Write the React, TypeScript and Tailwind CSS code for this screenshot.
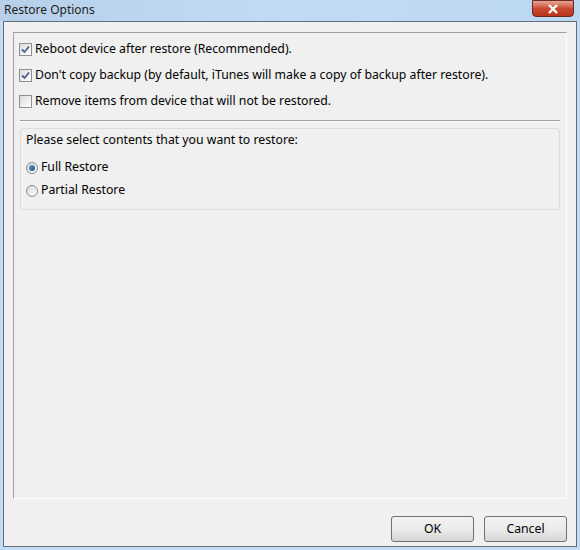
import React from "react";

function CheckRow({ checked, label }: { checked: boolean; label: string }) {
  return (
    <label className="flex items-center h-[26px] gap-[3px]">
      <span className="w-[13px] h-[13px] border border-[#8e8f8f] bg-gradient-to-br from-[#dcdcdc] to-white flex items-center justify-center shrink-0">
        {checked && (
          <svg width="9" height="9" viewBox="0 0 9 9">
            <path d="M1 4.5 L3.5 7 L8 1.5" fill="none" stroke="#4a5f97" strokeWidth="1.8" />
          </svg>
        )}
      </span>
      <span>{label}</span>
    </label>
  );
}

function RadioRow({ checked, label }: { checked: boolean; label: string }) {
  return (
    <label className="flex items-center h-[23px] gap-[3px]">
      <span className="w-[12px] h-[12px] rounded-full border border-[#8e8f8f] bg-gradient-to-br from-[#d6d6d6] to-white flex items-center justify-center shrink-0">
        {checked && <span className="w-[6px] h-[6px] rounded-full bg-gradient-to-br from-[#6ca0d8] to-[#1d4a86]" />}
      </span>
      <span>{label}</span>
    </label>
  );
}

export default function App() {
  return (
    <div
      className="w-[580px] h-[550px] bg-[#c4dbf2] flex flex-col text-[12.25px] text-black overflow-hidden"
      style={{ fontFamily: '"Segoe UI", "Noto Sans", sans-serif' }}
    >
      {/* Title bar */}
      <div className="h-[21px] flex items-start justify-between bg-gradient-to-r from-[#b7d0ea] via-[#c2dbf4] to-[#bcd7f2] shrink-0">
        <span className="pl-[4px] pt-[1px] text-[12px] text-[#1e1e1e]">Restore Options</span>
        <div className="w-[42px] h-[17px] mr-[6px] rounded-b-[4px] border border-[#6b2a1e] bg-gradient-to-b from-[#e8a595] via-[#c94a32] to-[#b9331c] flex items-center justify-center">
          <svg width="12" height="10" viewBox="0 0 12 10">
            <path d="M2 1 L10 9 M10 1 L2 9" stroke="#ffffff" strokeWidth="2.4" />
          </svg>
        </div>
      </div>

      {/* Window body */}
      <div className="flex-1 mx-[3px] mb-[3px] border border-[#5f6f80] bg-[#f0f0f0] flex flex-col px-[9px] pt-[10px]">
        <div className="h-[467px] border-t border-l border-[#a0a0a0] border-r border-b border-r-white border-b-white flex flex-col px-[5px] pt-[3px]">
          <CheckRow checked label="Reboot device after restore (Recommended)." />
          <CheckRow checked label="Don't copy backup (by default, iTunes will make a copy of backup after restore)." />
          <CheckRow checked={false} label="Remove items from device that will not be restored." />

          <div className="mt-[6px] mx-[1px] border-t border-[#a0a0a0] border-b border-b-white" />

          <div className="mt-[6px] mx-[1px] h-[82px] rounded-[3px] border border-[#dcdcdc] flex flex-col px-[5px] pt-[2px]">
            <div className="h-[18px]">Please select contents that you want to restore:</div>
            <div className="mt-[7px]">
              <RadioRow checked label="Full Restore" />
              <RadioRow checked={false} label="Partial Restore" />
            </div>
          </div>
        </div>

        <div className="flex justify-end gap-[10px] mt-[17px]">
          <button className="w-[83px] h-[26px] rounded-[3px] border border-[#707070] bg-gradient-to-b from-[#f2f2f2] via-[#ebebeb] to-[#d6d6d6]">
            OK
          </button>
          <button className="w-[83px] h-[26px] rounded-[3px] border border-[#707070] bg-gradient-to-b from-[#f2f2f2] via-[#ebebeb] to-[#d6d6d6]">
            Cancel
          </button>
        </div>
      </div>
    </div>
  );
}
